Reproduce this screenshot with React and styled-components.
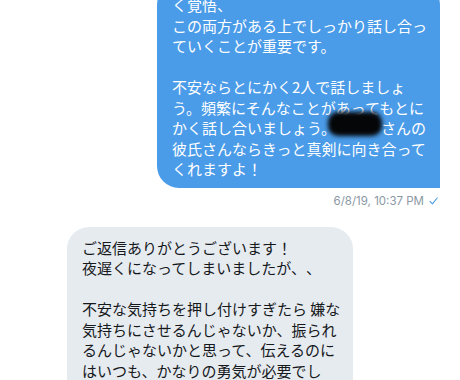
import styled, { createGlobalStyle } from "styled-components";

const Global = createGlobalStyle`
  html, body {
    margin: 0;
    padding: 0;
    background: #ffffff;
  }
  body {
    font-family: "Noto Sans CJK JP", "Noto Sans", sans-serif;
  }
`;

const Screen = styled.div`
  width: 460px;
  height: 380px;
  overflow: hidden;
  background: #ffffff;
`;

const Thread = styled.div`
  display: flex;
  flex-direction: column;
  margin-top: -17px;
`;

const Row = styled.div`
  display: flex;
  justify-content: ${(p) => (p.$out ? "flex-end" : "flex-start")};
  padding: ${(p) => (p.$out ? "0 20px 0 0" : "0 0 0 67px")};
  margin-top: ${(p) => p.$gap || 0}px;
`;

const Bubble = styled.div`
  box-sizing: border-box;
  width: ${(p) => p.$w}px;
  padding: ${(p) => (p.$out ? "12px 10px 8px 15px" : "11px 10px 8px 15px")};
  font-size: 15px;
  line-height: 20.5px;
  white-space: nowrap;
  text-spacing-trim: space-all;
  color: ${(p) => (p.$out ? "#ffffff" : "#16191c")};
  background: ${(p) => (p.$out ? "#4a9be8" : "#e6ebf0")};
  border-radius: ${(p) => (p.$out ? "22px 22px 0 22px" : "22px 22px 22px 0")};
`;

const Redacted = styled.span`
  display: inline-block;
  vertical-align: top;
  width: 54px;
  height: 24px;
  margin: -6px -1px 0 -8px;
  background: #050608;
  border-radius: 10px;
  filter: blur(2px);
`;

const Meta = styled.div`
  display: flex;
  align-items: center;
  justify-content: flex-end;
  gap: 5px;
  margin-top: 5px;
  padding-right: 22px;
  font-family: "Inter", "Noto Sans", sans-serif;
  font-size: 11.5px;
  line-height: 16px;
  color: #8b98a5;
`;

function Check() {
  return (
    <svg width="9" height="8" viewBox="0 0 9 8">
      <path d="M1 4.3 L3.4 6.8 L8.2 1" fill="none" stroke="#4a9be8" strokeWidth="1.1" strokeLinecap="round" strokeLinejoin="round" />
    </svg>
  );
}

export default function App() {
  return (
    <Screen>
      <Global />
      <Thread>
        <Row $out>
          <Bubble $out $w={283}>
            く覚悟、
            <br />
            この両方がある上でしっかり話し合っ
            <br />
            ていくことが重要です。
            <br />
            <br />
            不安ならとにかく2人で話しましょ
            <br />
            う。頻繁にそんなことがあってもとに
            <br />
            かく話し合いましょう。<Redacted />さんの
            <br />
            彼氏さんならきっと真剣に向き合って
            <br />
            くれますよ！
          </Bubble>
        </Row>
        <Meta>
          <span>6/8/19, 10:37 PM</span>
          <Check />
        </Meta>
        <Row $gap={18}>
          <Bubble $w={286}>
            ご返信ありがとうございます！
            <br />
            夜遅くになってしまいましたが、、
            <br />
            <br />
            不安な気持ちを押し付けすぎたら 嫌な
            <br />
            気持ちにさせるんじゃないか、振られ
            <br />
            るんじゃないかと思って、伝えるのに
            <br />
            はいつも、かなりの勇気が必要でし
            <br />
            た。
          </Bubble>
        </Row>
      </Thread>
    </Screen>
  );
}
